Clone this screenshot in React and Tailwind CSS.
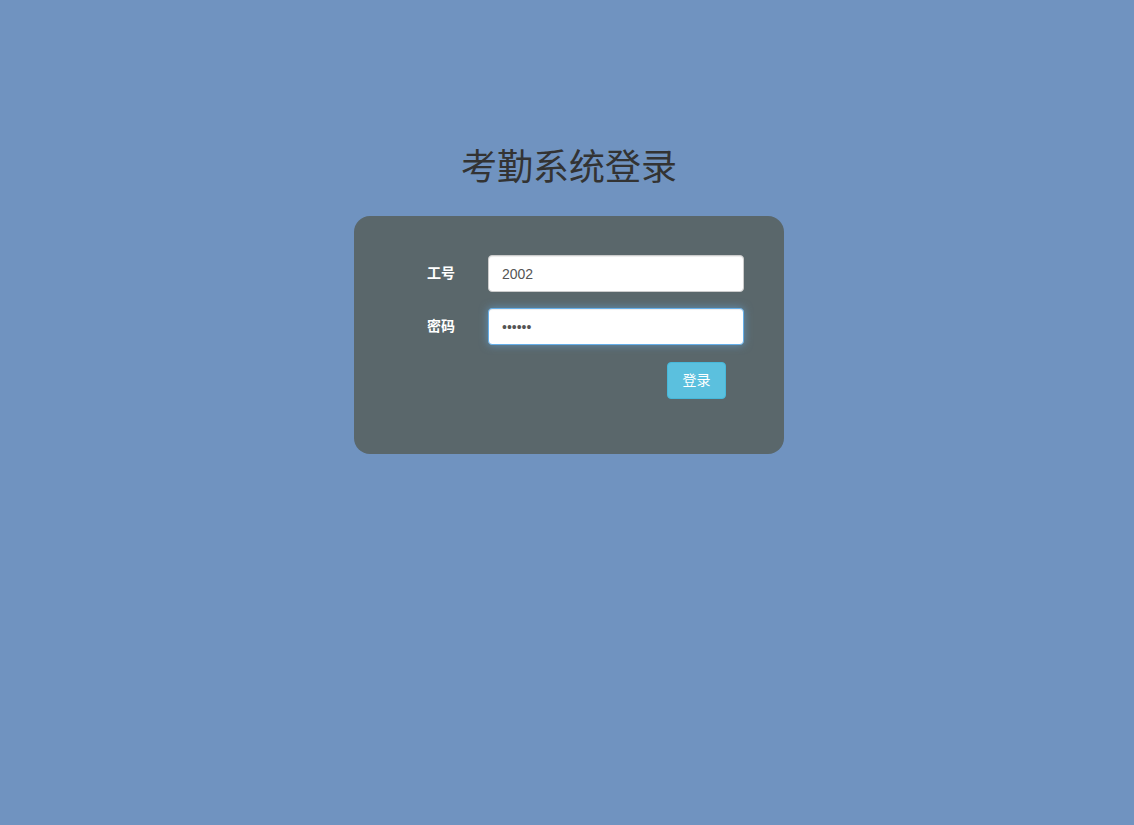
export default function App() {
    return (
        <div
            className="min-h-screen w-full bg-[#7093c0] pt-[148px] pl-[4px]"
            style={{ fontFamily: '"Liberation Sans", "Noto Sans CJK SC", sans-serif' }}
        >
            <h1 className="text-center text-[36px] leading-[40px] text-[#333] font-normal">考勤系统登录</h1>
            <div className="mx-auto mt-[28px] w-[430px] h-[238px] rounded-[16px] bg-[#5a676b] pt-[39px]">
                <div className="flex items-center h-[37px]">
                    <label className="w-[101px] text-right text-[14px] font-bold text-white">工号</label>
                    <input
                        type="text"
                        defaultValue="2002"
                        className="ml-[33px] w-[256px] h-[37px] rounded-[4px] border border-[#ccc] bg-white px-[13px] text-[14px] text-[#555] outline-none shadow-[inset_0_1px_1px_rgba(0,0,0,0.075)]"
                    />
                </div>
                <div className="flex items-center h-[37px] mt-[16px]">
                    <label className="w-[101px] text-right text-[14px] font-bold text-white">密码</label>
                    <input
                        type="password"
                        defaultValue="123456"
                        className="ml-[33px] w-[256px] h-[37px] rounded-[4px] border border-[#66afe9] bg-white px-[13px] text-[14px] text-[#555] outline-none shadow-[inset_0_1px_1px_rgba(0,0,0,0.075),0_0_8px_rgba(102,175,233,0.6)]"
                    />
                </div>
                <div className="flex mt-[17px]">
                    <button className="ml-[313px] w-[59px] h-[37px] rounded-[4px] border border-[#46b8da] bg-[#5bc0de] text-[14px] text-white">
                        登录
                    </button>
                </div>
            </div>
        </div>
    );
}
